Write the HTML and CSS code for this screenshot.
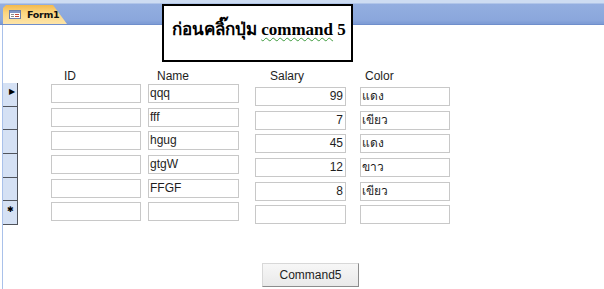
FILE: index.html
```html
<!DOCTYPE html>
<html lang="th">
<head>
  <meta charset="UTF-8">
  <title>Form1</title>
  <link rel="stylesheet" href="styles.css">
</head>
<body>
<div class="window">
  <div class="tab-bar">
    <div class="tab">
      <svg class="tab-icon" width="12" height="9" viewBox="0 0 12 9">
        <rect x="0.5" y="0.5" width="11" height="8" fill="#fff" stroke="#6d7fa8"/>
        <rect x="1" y="1" width="10" height="2" fill="#7f95c4"/>
        <rect x="2" y="4" width="3" height="1" fill="#8a8a8a"/>
        <rect x="6" y="4" width="4" height="1" fill="#c04a3a"/>
        <rect x="2" y="6" width="3" height="1" fill="#8a8a8a"/>
        <rect x="6" y="6" width="4" height="1" fill="#c04a3a"/>
      </svg>
      <span class="tab-title">Form1</span>
    </div>
  </div>

  <!-- กล่องข้อความซ้อนบนฟอร์ม -->
  <div class="note">ก่อนคลิ๊กปุ่ม <span class="spell">command</span> 5</div>

  <div class="sheet">
    <div class="head-row">
      <div class="col-sel"></div>
      <div class="col id head">ID</div>
      <div class="col name head">Name</div>
      <div class="col salary head">Salary</div>
      <div class="col color head">Color</div>
    </div>

    <div class="rec">
      <div class="col-sel sel"><span class="arrow">&#9654;</span></div>
      <div class="col id box"></div>
      <div class="col name box">qqq</div>
      <div class="col salary box low num">99</div>
      <div class="col color box low">แดง</div>
    </div>
    <div class="rec">
      <div class="col-sel sel"></div>
      <div class="col id box"></div>
      <div class="col name box">fff</div>
      <div class="col salary box low num">7</div>
      <div class="col color box low">เขียว</div>
    </div>
    <div class="rec">
      <div class="col-sel sel"></div>
      <div class="col id box"></div>
      <div class="col name box">hgug</div>
      <div class="col salary box low num">45</div>
      <div class="col color box low">แดง</div>
    </div>
    <div class="rec">
      <div class="col-sel sel"></div>
      <div class="col id box"></div>
      <div class="col name box">gtgW</div>
      <div class="col salary box low num">12</div>
      <div class="col color box low">ขาว</div>
    </div>
    <div class="rec">
      <div class="col-sel sel"></div>
      <div class="col id box"></div>
      <div class="col name box">FFGF</div>
      <div class="col salary box low num">8</div>
      <div class="col color box low">เขียว</div>
    </div>
    <div class="rec">
      <div class="col-sel sel"><span class="star">&#10033;</span></div>
      <div class="col id box"></div>
      <div class="col name box"></div>
      <div class="col salary box low num"></div>
      <div class="col color box low"></div>
    </div>

    <button class="cmd-btn">Command5</button>
  </div>
</div>
</body>
</html>
```

FILE: styles.css
```css
body {
  margin: 0;
  padding: 0;
  background: #fff;
  font-family: "Liberation Sans", Arial, sans-serif;
  font-size: 12px;
  color: #1e1e1e;
}

.window {
  position: relative;
  width: 604px;
  height: 289px;
  overflow: hidden;
}

.tab-bar {
  height: 24px;
  background: linear-gradient(#cddcf2 0, #cddcf2 3px, #93aee0 4px, #8ba7dc 20px, #7f9dd6 23px);
  border-bottom: 1px solid #6f8ecb;
  display: flex;
  align-items: flex-end;
  padding-left: 3px;
}

.tab {
  width: 64px;
  height: 19px;
  display: flex;
  align-items: center;
  padding-left: 6px;
  box-sizing: border-box;
  background: linear-gradient(#f2b94e, #fbd57e 40%, #fde4a8);
  clip-path: polygon(0 3px, 3px 0, 50px 0, 100% 100%, 0 100%);
}

.tab-icon {
  display: block;
  margin-right: 6px;
}

.tab-title {
  font-family: "DejaVu Sans", sans-serif;
  font-weight: bold;
  font-size: 9.5px;
  letter-spacing: -0.3px;
  color: #111;
}

.note {
  position: absolute;
  left: 162px;
  top: 4px;
  width: 191px;
  height: 58px;
  box-sizing: border-box;
  border: 2px solid #000;
  background: #fff;
  padding: 9px 0 0 8px;
  font-family: "Liberation Serif", "Times New Roman", serif;
  font-weight: bold;
  font-size: 17px;
  color: #000;
}

.spell {
  text-decoration: underline wavy #3c9a3c;
  text-decoration-thickness: 1px;
  text-underline-offset: 2px;
}

.sheet {
  margin-left: 2px;
  border-left: 1px solid #a9c1ea;
  height: 264px;
  padding-top: 44px;
  box-sizing: border-box;
}

.head-row,
.rec {
  display: flex;
  align-items: flex-start;
}

.head-row {
  height: 14px;
  line-height: 14px;
}

.rec {
  height: 23.66px;
}

.col-sel {
  width: 15px;
  flex-shrink: 0;
}

.sel {
  height: 100%;
  box-sizing: border-box;
  background: #d5e1f4;
  border-right: 1px solid #50545c;
  border-bottom: 1px solid #50545c;
  position: relative;
}

.rec:first-of-type .sel {
  border-top: 1px solid #50545c;
}

.arrow {
  position: absolute;
  left: 6px;
  top: 4px;
  font-size: 8px;
  color: #000;
}

.star {
  position: absolute;
  left: 4px;
  top: 4px;
  font-size: 8px;
  color: #000;
}

.col {
  box-sizing: border-box;
}

.id { margin-left: 33px; width: 90px; }
.name { margin-left: 7px; width: 91px; }
.salary { margin-left: 16px; width: 91px; }
.color { margin-left: 14px; width: 90px; }

.head.id { padding-left: 13px; }
.head.name { padding-left: 9px; }
.head.salary { padding-left: 15px; }
.head.color { padding-left: 5px; }

.box {
  height: 19px;
  margin-top: 1px;
  border: 1px solid #c8c8c8;
  padding: 0 2px 0 1px;
  line-height: 16px;
  white-space: nowrap;
  overflow: hidden;
}

.box.low {
  margin-top: 4px;
}

.num {
  text-align: right;
}

.cmd-btn {
  display: block;
  margin: 38px 0 0 259px;
  width: 97px;
  height: 24px;
  padding: 0;
  font-family: "Liberation Sans", Arial, sans-serif;
  font-size: 12px;
  color: #1e1e1e;
  background: linear-gradient(#f7f7f7, #e9e9e9);
  border: 1px solid #d8d8d8;
  border-right-color: #8c8c8c;
  border-bottom-color: #8c8c8c;
  border-radius: 0;
}
```
